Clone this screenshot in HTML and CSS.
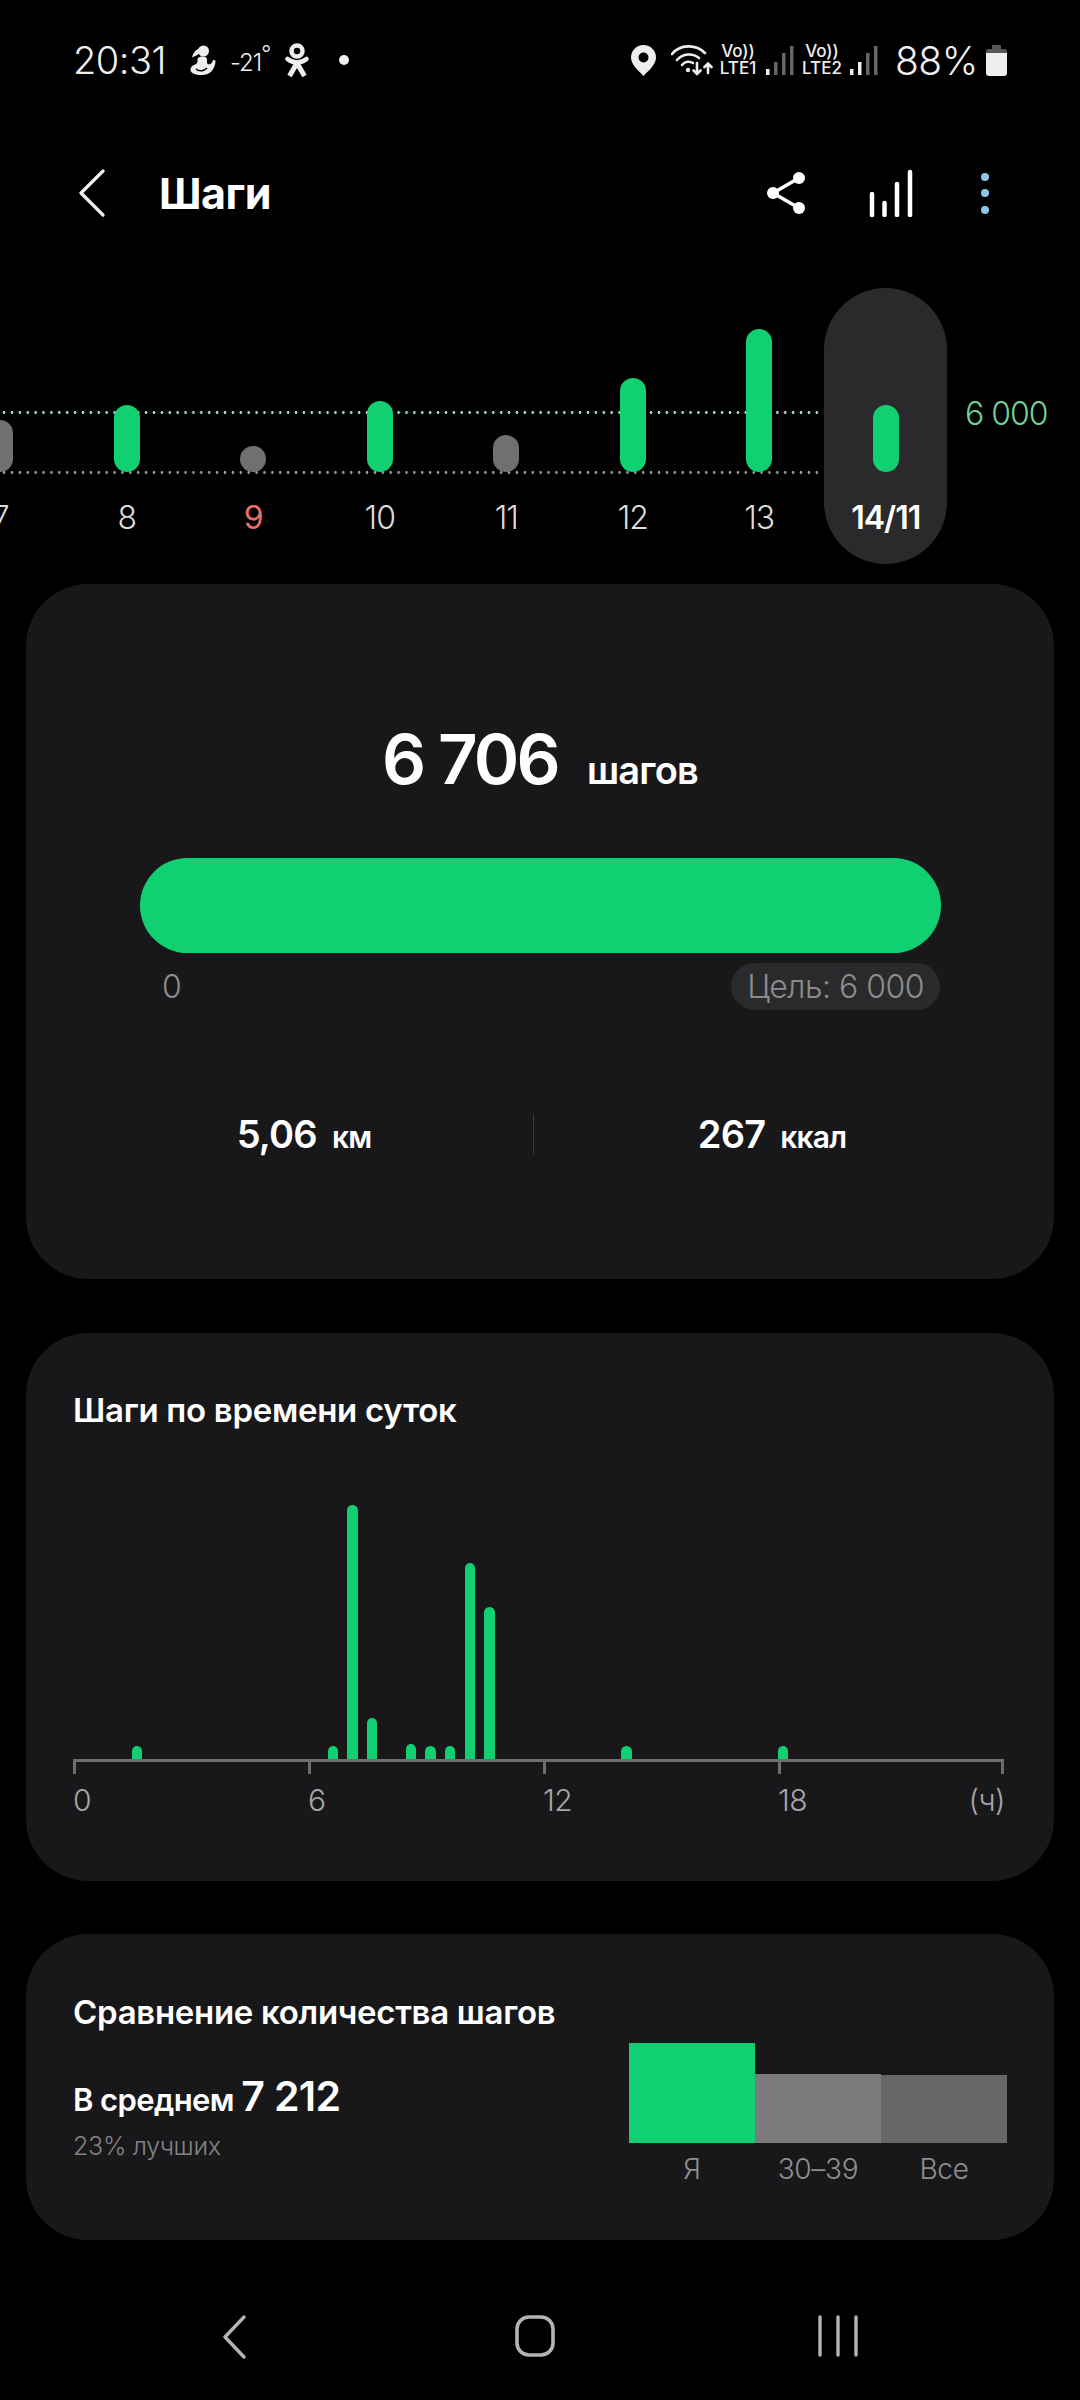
FILE: index.html
```html
<!DOCTYPE html>
<html lang="ru">
<head>
    <meta charset="UTF-8">
    <meta name="viewport" content="width=device-width, initial-scale=1.0">
    <title>Шаги</title>
    <link rel="stylesheet" href="styles.css">
</head>
<body>
    <div class="status-bar">
        <span class="clock">20:31</span>
        <svg class="st-person" viewBox="0 0 26 30">
            <circle cx="13.500" cy="6" r="5.500" fill="#eee"/>
            <path d="M9 3.500 C5 5 3 8 2 12.500 C5 11.500 8 9.500 10 8 Z" fill="#eee"/>
            <path d="M8 13 C11 11 16 11 17 14 L17 18 C19 21 22 19 23 15 L25.500 15.500 C25.500 24 20 30 12 30 C5 30 0 28 0.500 24 C1 20 6 20 7 18 C8 16 7 15 8 13 Z" fill="#eee"/>
            <path d="M6 24 C9 27 14 26 17 23" fill="none" stroke="#000" stroke-width="1.400"/>
        </svg>
        <span class="temp">-21<span class="deg">°</span></span>
        <svg class="st-ok" viewBox="0 0 24 34">
            <circle cx="12" cy="8" r="5.500" fill="none" stroke="#eee" stroke-width="4.500"/>
            <path d="M2.500 16 C8 20.500 16 20.500 21.500 16" fill="none" stroke="#eee" stroke-width="4.500" stroke-linecap="round"/>
            <path d="M12 20 L4.500 33 M12 20 L19.500 33" fill="none" stroke="#eee" stroke-width="5"/>
        </svg>
        <span class="st-dot"></span>

        <div class="status-right">
            <svg class="st-pin" viewBox="0 0 25 31">
                <path d="M12.500 0 C5.500 0 0 5.500 0 12.500 C0 20 8 26 12.500 31 C17 26 25 20 25 12.500 C25 5.500 19.500 0 12.500 0 Z M12.500 7.500 A5 5 0 1 1 12.500 17.500 A5 5 0 1 1 12.500 7.500 Z" fill="#eee" fill-rule="evenodd"/>
            </svg>
            <svg class="st-wifi" viewBox="0 0 42 31">
                <g fill="none" stroke="#eee" stroke-width="2.600" stroke-linecap="round">
                    <path d="M1 9 C9 -1 25 -1 34 8"/>
                    <path d="M6 15 C12 8 22 8 28 13"/>
                    <path d="M11 20 C14 16 19 16 22 18"/>
                    <path d="M26 18 V29 M22.500 25.500 L26 29 L29.500 25.500"/>
                    <path d="M37 28 V19 M33.500 22 L37 18.500 L40.500 22"/>
                </g>
                <circle cx="17" cy="25" r="2.200" fill="#eee"/>
            </svg>
            <div class="lte lte-one"><span>Vo))</span><span>LTE1</span></div>
            <svg class="st-signal" viewBox="0 0 28 31">
                <rect x="0" y="24" width="3.500" height="6" fill="#eee"/>
                <rect x="8" y="17" width="3.500" height="13" fill="#666"/>
                <rect x="16" y="8" width="3.500" height="22" fill="#666"/>
                <rect x="24" y="1" width="3.500" height="29" fill="#666"/>
            </svg>
            <div class="lte lte-two"><span>Vo))</span><span>LTE2</span></div>
            <svg class="st-signal" viewBox="0 0 28 31">
                <rect x="0" y="24" width="3.500" height="6" fill="#eee"/>
                <rect x="8" y="17" width="3.500" height="13" fill="#eee"/>
                <rect x="16" y="8" width="3.500" height="22" fill="#666"/>
                <rect x="24" y="1" width="3.500" height="29" fill="#666"/>
            </svg>
            <span class="battery-text">88%</span>
            <svg class="st-battery" viewBox="0 0 21 31">
                <path d="M6 0 H15 V4 H6 Z" fill="#555"/>
                <path d="M2 4 H19 A2 2 0 0 1 21 6 V8 H0 V6 A2 2 0 0 1 2 4 Z" fill="#555"/>
                <path d="M0 8 H21 V28 A3 3 0 0 1 18 31 H3 A3 3 0 0 1 0 28 Z" fill="#eee"/>
            </svg>
        </div>
    </div>

    <div class="header">
        <svg class="back-icon" viewBox="0 0 26 48">
            <path d="M24 2 L2 24 L24 46" fill="none" stroke="#f2f2f2" stroke-width="3.200" stroke-linecap="round" stroke-linejoin="round"/>
        </svg>
        <div class="title">Шаги</div>
        <svg class="share-icon" viewBox="0 0 38 42">
            <g fill="#fff">
                <circle cx="32" cy="6" r="6"/>
                <circle cx="6" cy="21" r="6"/>
                <circle cx="32" cy="36" r="6"/>
            </g>
            <path d="M32 6 L6 21 L32 36" fill="none" stroke="#fff" stroke-width="3.500"/>
        </svg>
        <svg class="bars-icon" viewBox="0 0 44 48">
            <g stroke="#fff" stroke-width="4.500" stroke-linecap="round">
                <path d="M3 25 V46"/>
                <path d="M15.500 34 V46"/>
                <path d="M28 15 V46"/>
                <path d="M41 3 V46"/>
            </g>
        </svg>
        <div class="more-dots"><span></span><span></span><span></span></div>
    </div>

    <div class="strip">
        <div class="guide guide-goal"></div>
        <div class="guide guide-zero"></div>
        <div class="day"><div class="day-plot"><div class="day-bar off h-7"></div></div><div class="day-label">7</div></div>
        <div class="day"><div class="day-plot"><div class="day-bar h-8"></div></div><div class="day-label">8</div></div>
        <div class="day"><div class="day-plot"><div class="day-bar off h-9"></div></div><div class="day-label sunday">9</div></div>
        <div class="day"><div class="day-plot"><div class="day-bar h-10"></div></div><div class="day-label">10</div></div>
        <div class="day"><div class="day-plot"><div class="day-bar off h-11"></div></div><div class="day-label">11</div></div>
        <div class="day"><div class="day-plot"><div class="day-bar h-12"></div></div><div class="day-label">12</div></div>
        <div class="day"><div class="day-plot"><div class="day-bar h-13"></div></div><div class="day-label">13</div></div>
        <div class="day today"><div class="day-plot"><div class="day-bar h-8"></div></div><div class="day-label">14/11</div></div>
        <div class="goal-label">6 000</div>
    </div>

    <div class="card card-steps">
        <div class="steps-line">
            <span class="steps-value">6 706</span>
            <span class="steps-unit">шагов</span>
        </div>
        <div class="progress"></div>
        <div class="progress-scale">
            <span class="scale-zero">0</span>
            <span class="goal-pill">Цель: 6 000</span>
        </div>
        <div class="stats">
            <div class="stat"><span class="stat-value">5,06</span><span class="stat-unit">км</span></div>
            <div class="stat-divider"></div>
            <div class="stat"><span class="stat-value">267</span><span class="stat-unit">ккал</span></div>
        </div>
    </div>

    <div class="card card-hours">
        <div class="card-title">Шаги по времени суток</div>
        <div class="hours-plot">
            <div class="hour-bar" style="grid-column: 4; height: 13px"></div>
            <div class="hour-bar" style="grid-column: 14; height: 13px"></div>
            <div class="hour-bar" style="grid-column: 15; height: 254px"></div>
            <div class="hour-bar" style="grid-column: 16; height: 41px"></div>
            <div class="hour-bar" style="grid-column: 18; height: 15px"></div>
            <div class="hour-bar" style="grid-column: 19; height: 13px"></div>
            <div class="hour-bar" style="grid-column: 20; height: 13px"></div>
            <div class="hour-bar" style="grid-column: 21; height: 196px"></div>
            <div class="hour-bar" style="grid-column: 22; height: 152px"></div>
            <div class="hour-bar" style="grid-column: 29; height: 13px"></div>
            <div class="hour-bar" style="grid-column: 37; height: 13px"></div>
        </div>
        <div class="hours-axis">
            <div class="tick"><span>0</span></div>
            <div class="tick"><span>6</span></div>
            <div class="tick"><span>12</span></div>
            <div class="tick tick-last"><span>18</span><span class="axis-unit">(ч)</span></div>
        </div>
    </div>

    <div class="card card-compare">
        <div class="card-title">Сравнение количества шагов</div>
        <div class="compare-row">
            <div class="compare-text">
                <div class="avg-line">В среднем <span class="avg-value">7 212</span></div>
                <div class="avg-note">23% лучших</div>
            </div>
            <div class="compare-chart">
                <div class="compare-col"><div class="compare-bar me"></div><span>Я</span></div>
                <div class="compare-col"><div class="compare-bar age"></div><span>30–39</span></div>
                <div class="compare-col"><div class="compare-bar all"></div><span>Все</span></div>
            </div>
        </div>
    </div>

    <div class="nav-bar">
        <svg class="nav-back" viewBox="0 0 24 44">
            <path d="M22 2 L3 22 L22 42" fill="none" stroke="#b4b4b4" stroke-width="3.400" stroke-linecap="round" stroke-linejoin="round"/>
        </svg>
        <svg class="nav-home" viewBox="0 0 40 42">
            <rect x="2" y="2" width="36" height="38" rx="12" fill="none" stroke="#b4b4b4" stroke-width="3.600"/>
        </svg>
        <svg class="nav-recent" viewBox="0 0 40 42">
            <path d="M2 2 V40 M20 2 V40 M38 2 V40" stroke="#b4b4b4" stroke-width="3.400" stroke-linecap="round"/>
        </svg>
    </div>
</body>
</html>
```

FILE: styles.css
```css
* { margin: 0; padding: 0; box-sizing: border-box; }

body {
    width: 1080px;
    height: 2400px;
    overflow: hidden;
    background: #000;
    color: #fff;
    font-family: Inter, Roboto, sans-serif;
}

/* status bar */
.status-bar {
    height: 120px;
    display: flex;
    align-items: center;
    padding-left: 73px;
    color: #eee;
}

.clock { font-size: 38px; font-weight: 300; width: 117px; letter-spacing: -0.5px; }
.st-person { width: 26px; height: 30px; }
.temp { font-size: 24px; font-weight: 300; margin-left: 14px; width: 40px; position: relative; top: 2px; letter-spacing: -1px; }
.deg { font-size: 22px; position: relative; top: -10px; }
.st-ok { width: 24px; height: 34px; margin-left: 15px; }
.st-dot { width: 10px; height: 10px; border-radius: 50%; background: #eee; margin-left: 30px; }

.status-right {
    margin-left: auto;
    padding-right: 73px;
    display: flex;
    align-items: center;
}

.st-pin { width: 25px; height: 31px; }
.st-wifi { width: 42px; height: 31px; margin-left: 15px; }
.lte {
    display: flex;
    flex-direction: column;
    align-items: center;
    font-size: 17px;
    font-weight: 500;
    line-height: 17px;
    width: 40px;
    margin-left: 5px;
}
.st-signal { width: 28px; height: 31px; margin-left: 8px; }
.lte-two { margin-left: 8px; }
.battery-text { font-size: 39px; font-weight: 300; margin-left: 17px; width: 91px; letter-spacing: -0.5px; }
.st-battery { width: 21px; height: 31px; }

/* header */
.header {
    height: 146px;
    display: flex;
    align-items: center;
    padding-left: 79px;
}

.back-icon { width: 26px; height: 48px; }
.title { font-size: 43px; font-weight: 700; margin-left: 54px; letter-spacing: -0.5px; }
.share-icon { width: 38px; height: 42px; margin-left: auto; }
.bars-icon { width: 44px; height: 48px; margin-left: 64px; }
.more-dots {
    display: flex;
    flex-direction: column;
    gap: 8.500px;
    margin-left: 68px;
    margin-right: 91px;
}
.more-dots span { width: 8px; height: 8px; border-radius: 50%; background: #8fc6e6; }

/* week strip */
.strip {
    position: relative;
    height: 276px;
    margin-top: 22px;
    margin-left: -63px;
    display: flex;
}

.guide {
    position: absolute;
    left: 0;
    width: 884px;
    height: 3px;
    background-size: 7.900px 3px;
}
.guide-goal {
    top: 123px;
    background-image: radial-gradient(circle at center, #a5dcc2 1.200px, transparent 1.600px);
}
.guide-zero {
    top: 183px;
    background-image: radial-gradient(circle at center, #87a094 1.200px, transparent 1.600px);
}

.day {
    flex: 0 0 126.500px;
    display: flex;
    flex-direction: column;
    align-items: center;
}
.day.today {
    flex: 0 0 123px;
    margin: 0 1.750px;
    background: #2a2a2c;
    border-radius: 62px;
}

.day-plot { height: 184px; display: flex; align-items: flex-end; }
.day-bar {
    position: relative;
    width: 26px;
    border-radius: 13px;
    background: #11d071;
}
.day-bar.off { background: #707070; }

.h-7 { height: 52px; }
.h-8 { height: 67px; }
.h-9 { height: 26px; }
.h-10 { height: 71px; }
.h-11 { height: 37px; }
.h-12 { height: 94px; }
.h-13 { height: 143px; }

.day-label {
    margin-top: 26px;
    font-size: 32px;
    line-height: 40px;
    font-weight: 300;
    color: #dcdcdc;
    letter-spacing: -1px;
}
.day-label.sunday { color: #ee6d68; font-weight: 400; }
.today .day-label { color: #fff; font-weight: 600; }

.goal-label {
    margin-left: 16px;
    margin-top: 106px;
    font-size: 32px;
    line-height: 40px;
    font-weight: 300;
    color: #72cf97;
    white-space: nowrap;
    letter-spacing: -1px;
}

/* cards */
.card {
    margin: 0 26px;
    background: #18181a;
    border-radius: 62px;
}

.card-title { font-size: 33px; font-weight: 600; line-height: 40px; letter-spacing: -0.3px; }

.card-steps { height: 695px; margin-top: 20px; padding-top: 135px; }

.steps-line {
    display: flex;
    justify-content: center;
    align-items: baseline;
    line-height: 80px;
}
.steps-value { font-size: 69px; font-weight: 600; letter-spacing: -2.800px; }
.steps-unit { font-size: 38px; font-weight: 600; margin-left: 29px; letter-spacing: -0.800px; }

.progress {
    height: 95px;
    margin: 48px 113px 0 114px;
    border-radius: 48px;
    background: #11d071;
}

.progress-scale {
    display: flex;
    justify-content: space-between;
    align-items: center;
    margin: 10px 114px 0 136px;
    font-size: 32px;
    font-weight: 300;
    color: #8c8c8c;
    letter-spacing: -0.5px;
}
.goal-pill {
    padding: 0 16px;
    height: 47px;
    line-height: 47px;
    border-radius: 24px;
    background: #2a2a2c;
}

.stats {
    display: grid;
    grid-template-columns: 458px 1px 476px;
    margin: 101px 0 0 49px;
    align-items: center;
}
.stat { display: flex; justify-content: center; align-items: baseline; font-weight: 600; }
.stat-value { font-size: 38px; letter-spacing: -0.800px; }
.stat-unit { font-size: 30px; margin-left: 15px; letter-spacing: -0.800px; }
.stat-divider { height: 40px; background: #3a3a3c; }

.card-hours { height: 548px; margin-top: 54px; padding: 57px 0 0 47px; }

.hours-plot {
    display: grid;
    grid-template-columns: repeat(48, 19.580px);
    align-items: end;
    width: 931px;
    height: 255px;
    margin-top: 74px;
}
.hour-bar {
    grid-row: 1;
    width: 10.500px;
    border-radius: 5.250px 5.250px 0 0;
    background: #11d071;
}

.hours-axis {
    display: grid;
    grid-template-columns: 235px 235px 235px 226px;
    width: 931px;
    border-top: 3px solid #6e6e6e;
}
.tick {
    position: relative;
    height: 12px;
    border-left: 3px solid #6e6e6e;
    font-size: 30px;
    font-weight: 300;
    color: #a6a6a6;
    letter-spacing: -0.5px;
}
.tick span { position: absolute; left: -3px; top: 19px; line-height: 38px; }
.tick-last { border-right: 3px solid #6e6e6e; }
.tick span.axis-unit { left: auto; right: -4px; }

.card-compare { height: 306px; margin-top: 53px; padding: 58px 47px 0 47px; }

.compare-row { display: flex; justify-content: space-between; }

.compare-text { margin-top: 42px; }
.avg-line { font-size: 31px; font-weight: 600; line-height: 44px; letter-spacing: -0.6px; }
.avg-value { font-size: 41px; }
.avg-note { margin-top: 8px; font-size: 25px; font-weight: 300; line-height: 32px; color: #848484; letter-spacing: -0.3px; }

.compare-chart {
    display: flex;
    margin-top: 11px;
}
.compare-col {
    width: 126px;
    display: flex;
    flex-direction: column;
    align-items: center;
    justify-content: flex-end;
    font-size: 28px;
    font-weight: 300;
    line-height: 52px;
    color: #8e8e8e;
    letter-spacing: -0.3px;
}
.compare-bar { width: 100%; }
.compare-bar.me { height: 100px; background: #11d071; }
.compare-bar.age { height: 69px; background: #7b7b7b; }
.compare-bar.all { height: 68px; background: #676767; }

/* bottom nav */
.nav-bar {
    display: grid;
    grid-template-columns: repeat(3, 303px);
    justify-items: center;
    padding-left: 80px;
    padding-top: 75px;
}
.nav-back { width: 24px; height: 44px; margin-left: 4px; }
.nav-home { width: 40px; height: 42px; }
.nav-recent { width: 40px; height: 42px; }
```
